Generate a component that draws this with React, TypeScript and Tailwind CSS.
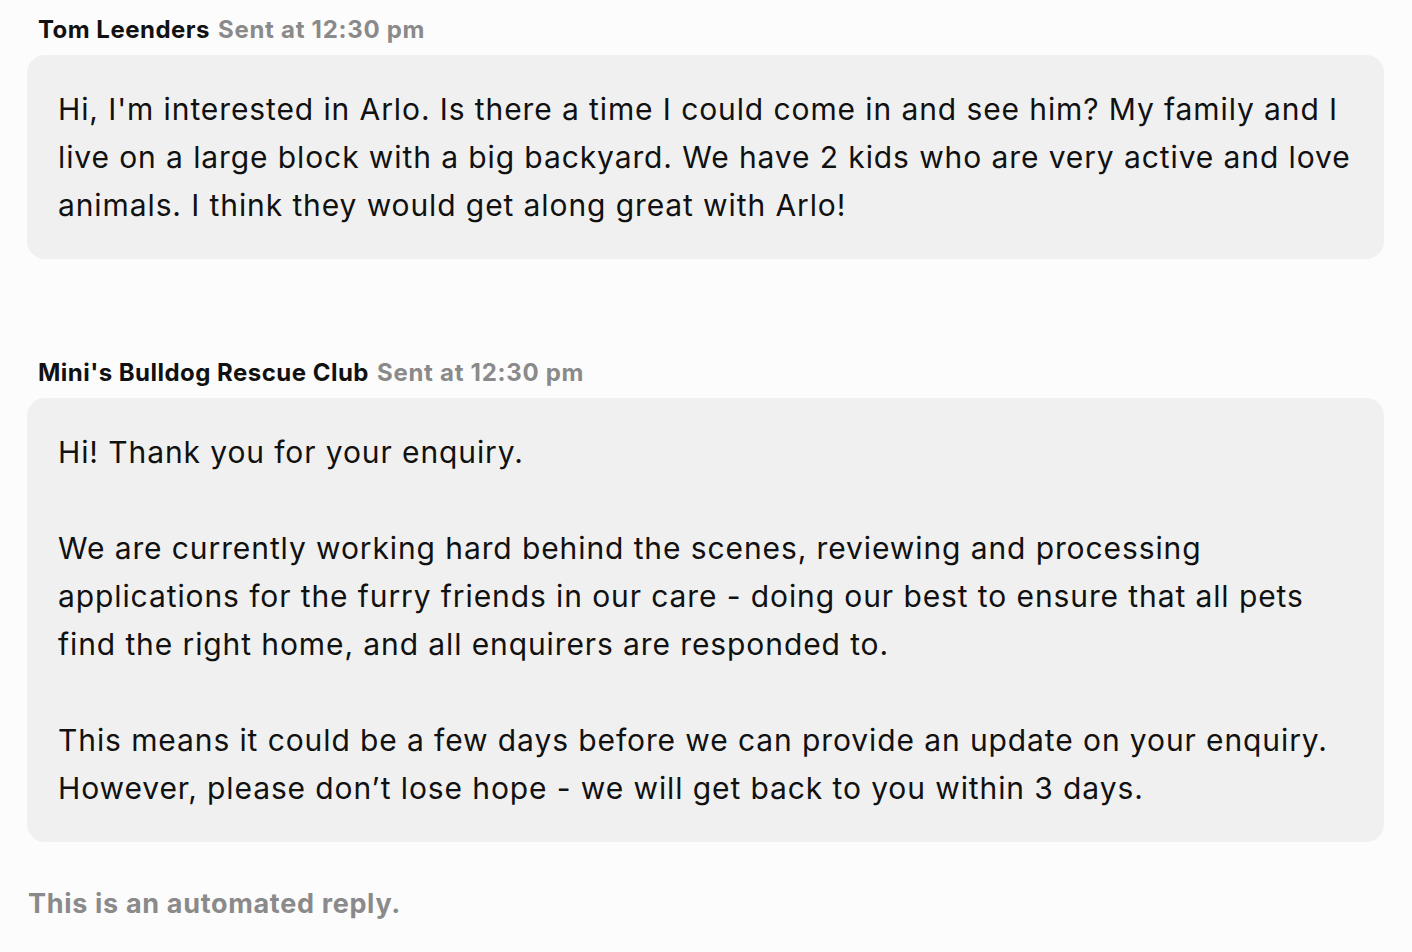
const messages = [
  {
    id: 1,
    sender: "Tom Leenders",
    time: "12:30 pm",
    paragraphs: [
      "Hi, I'm interested in Arlo. Is there a time I could come in and see him? My family and I live on a large block with a big backyard. We have 2 kids who are very active and love animals. I think they would get along great with Arlo!",
    ],
  },
  {
    id: 2,
    sender: "Mini's Bulldog Rescue Club",
    time: "12:30 pm",
    paragraphs: [
      "Hi! Thank you for your enquiry.",
      "We are currently working hard behind the scenes, reviewing and processing applications for the furry friends in our care - doing our best to ensure that all pets find the right home, and all enquirers are responded to.",
      "This means it could be a few days before we can provide an update on your enquiry. However, please don’t lose hope - we will get back to you within 3 days.",
    ],
  },
];

const App = () => {
  return (
    <div className="min-h-screen bg-[#fcfcfc] pl-[27px] pr-[28px] pt-[14px] font-['Inter',sans-serif] text-[#111111]">
      <div className="flex flex-col gap-[98px]">
        {messages.map((message) => (
          <section key={message.id}>
            <div className="flex h-8 items-center gap-[8px] pl-[11px] text-[24px] font-bold tracking-[0.02em]">
              <span className="text-[#111111]">{message.sender}</span>
              <span className="tracking-[0.03em] text-[#8a8a8a]">Sent at {message.time}</span>
            </div>
            <div className="mt-[9px] rounded-[18px] bg-[#f0f0f0] py-[30px] pl-[31px] pr-[26px] text-[30px] leading-[48px] tracking-[0.03em]">
              {message.paragraphs.map((p, i) => (
                <p key={i} className={i > 0 ? "mt-[48px]" : ""}>
                  {p}
                </p>
              ))}
            </div>
          </section>
        ))}
      </div>
      <p className="mt-[46px] flex h-8 items-center pl-px text-[27px] font-bold tracking-[0.025em] text-[#8a8a8a]">
        This is an automated reply.
      </p>
    </div>
  );
};

export default App;
